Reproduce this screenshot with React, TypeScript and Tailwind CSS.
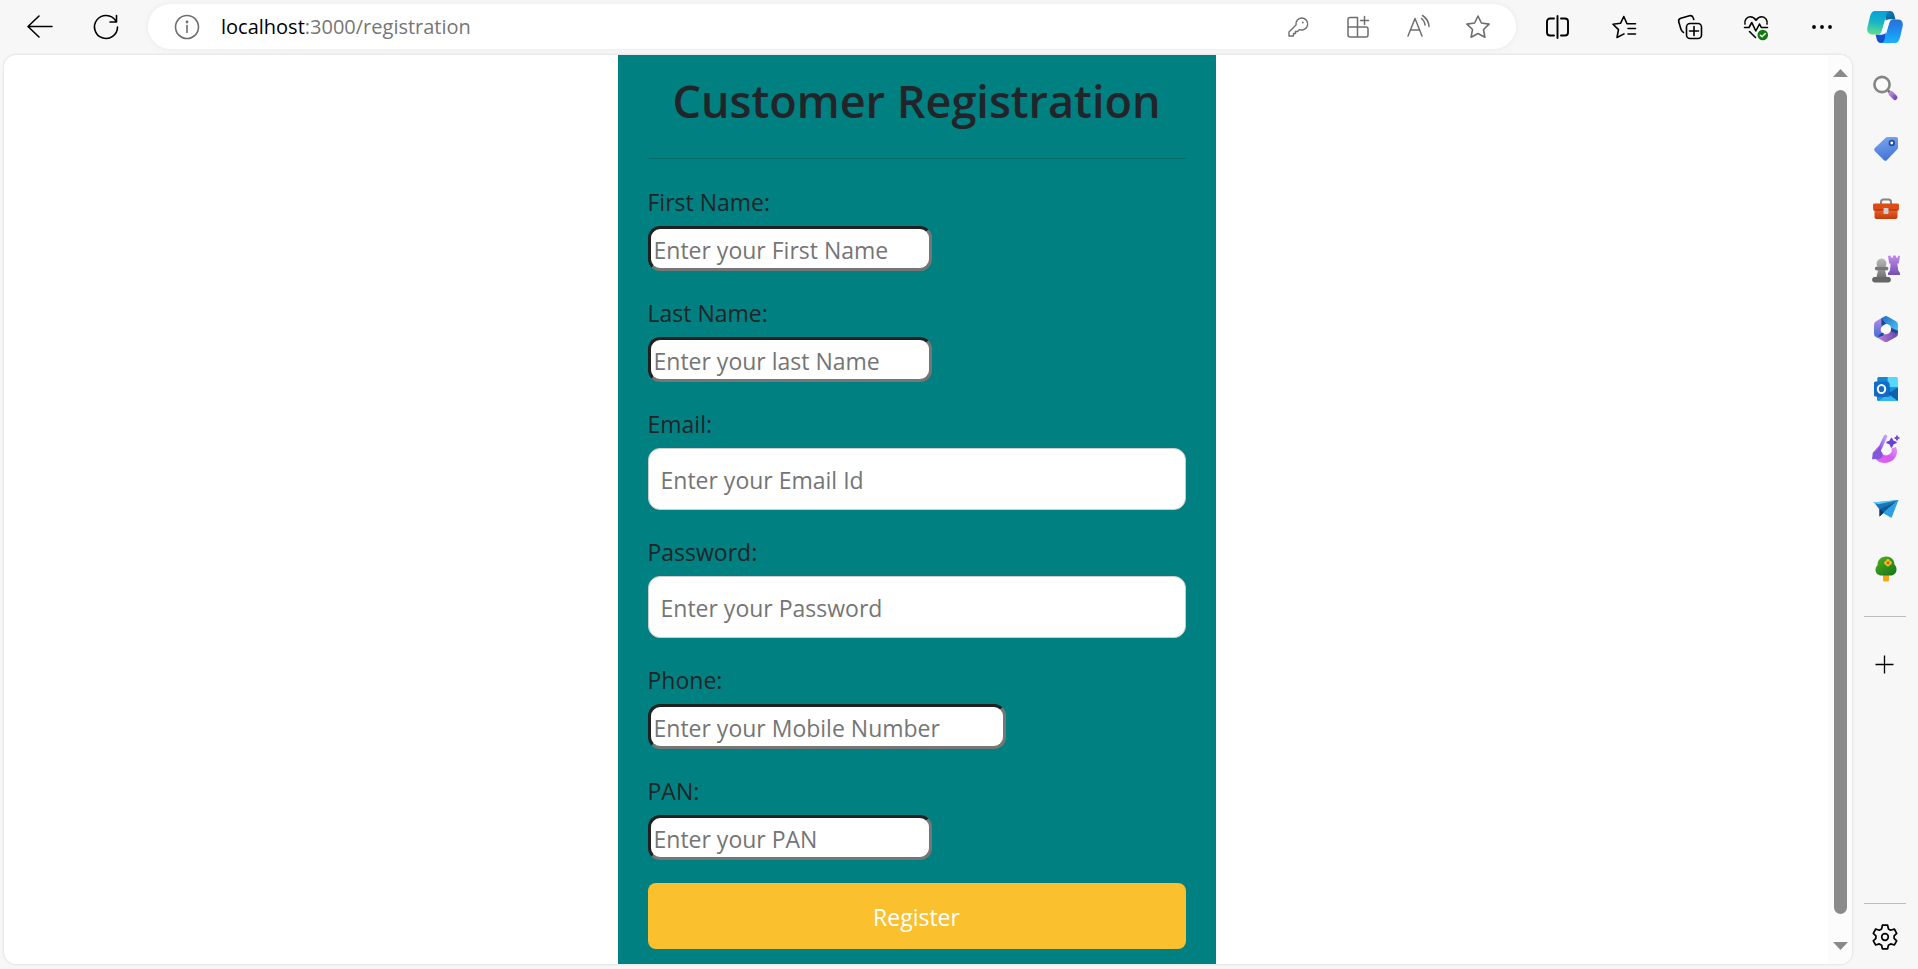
import type { ReactNode } from "react";

function ToolButton({ label, wide, children }: { label: string; wide?: boolean; children: ReactNode }) {
  return (
    <button
      type="button"
      aria-label={label}
      className={`flex h-11 shrink-0 items-center justify-center ${wide ? "w-[66px]" : "w-[60px]"}`}
    >
      {children}
    </button>
  );
}

function LineIcon({ children, className = "text-black" }: { children: ReactNode; className?: string }) {
  return (
    <svg
      width="28"
      height="28"
      viewBox="0 0 28 28"
      fill="none"
      stroke="currentColor"
      strokeWidth="1.6"
      strokeLinecap="round"
      strokeLinejoin="round"
      className={className}
    >
      {children}
    </svg>
  );
}

const gray = "text-[#6e6e6e]";

function CopilotLogo() {
  return (
    <svg width="36" height="32" viewBox="0 0 36 32">
      <defs>
        <linearGradient id="cp-a" x1="0.4" y1="0" x2="0.3" y2="1">
          <stop offset="0" stopColor="#0a9fd8" />
          <stop offset="0.45" stopColor="#16b3c9" />
          <stop offset="1" stopColor="#5fe08c" />
        </linearGradient>
        <linearGradient id="cp-b" x1="0.6" y1="0" x2="0.6" y2="1">
          <stop offset="0" stopColor="#2a6fd6" />
          <stop offset="0.5" stopColor="#1f8df0" />
          <stop offset="1" stopColor="#18b4fb" />
        </linearGradient>
        <linearGradient id="cp-c" x1="0" y1="0" x2="1" y2="1">
          <stop offset="0" stopColor="#0a86c4" />
          <stop offset="1" stopColor="#075a86" />
        </linearGradient>
      </defs>
      <path d="M17 0h6c2.500 0 3.600 1.600 4.300 4l1.200 4.500h-5.500c-2 0-3.200.8-4 2.500z" fill="url(#cp-c)" />
      <path d="M19 32h-5c-2.500 0-3.600-1.600-4.300-4L8.500 23.500h6c2 0 3.200-1.500 4-4z" fill="#1550d4" />
      <path d="M8 0h15c-2 0-3 1.600-3.700 4l-4.600 16.500c-.7 2-1.700 3-3.700 3H5c-3.500 0-5.500-2.700-4.700-6.500L3 5.500C3.900 2 5.200 0 8 0z" fill="url(#cp-a)" />
      <path d="M28 32H14c2 0 3-1.600 3.700-4l4.600-16.500c.7-2 1.700-3 3.700-3h5c3.500 0 5.500 2.700 4.700 6.500L33 26.500c-.9 3.500-2.200 5.500-5 5.500z" fill="url(#cp-b)" />
      <path d="M22 8.500h4c-2 0-3 1-3.700 3l-2.800 8.500c-.8 2.500-2.200 3.500-4.800 3.500h-3.700c2 0 3-1 3.700-3l2.700-8.500c.9-2.500 2-3.500 4.600-3.500z" fill="#f4fbff" />
    </svg>
  );
}

function SearchIcon() {
  return (
    <svg width="28" height="28" viewBox="0 0 28 28">
      <defs>
        <linearGradient id="se-a" x1="0" y1="0" x2="1" y2="1">
          <stop offset="0" stopColor="#b584e0" />
          <stop offset="1" stopColor="#7a4fb8" />
        </linearGradient>
      </defs>
      <path d="M16 15.500l4 4" stroke="#6b6b6b" strokeWidth="2.500" />
      <circle cx="10" cy="9.500" r="7.600" fill="#fafafa" stroke="#858585" strokeWidth="2.600" />
      <path d="M19 18.500l4 4" stroke="url(#se-a)" strokeWidth="5" strokeLinecap="round" />
    </svg>
  );
}

function TagIcon() {
  return (
    <svg width="28" height="28" viewBox="0 0 28 28">
      <defs>
        <linearGradient id="tg-a" x1="0.4" y1="0" x2="0.6" y2="1">
          <stop offset="0" stopColor="#76a5ee" />
          <stop offset="1" stopColor="#4272d4" />
        </linearGradient>
      </defs>
      <path d="M15.500 2H24a2 2 0 0 1 2 2v8.500a3 3 0 0 1-.9 2L15 25a2.200 2.200 0 0 1-3.200 0L2.900 16.200a2.200 2.200 0 0 1 0-3.200L13.400 2.900a3 3 0 0 1 2.100-.9z" fill="url(#tg-a)" />
      <circle cx="19.800" cy="8" r="2.300" fill="#fff" stroke="#264a9a" strokeWidth="1.800" />
    </svg>
  );
}

function ToolboxIcon() {
  return (
    <svg width="28" height="24" viewBox="0 0 28 24">
      <defs>
        <linearGradient id="tb-a" x1="0" y1="0" x2="0" y2="1">
          <stop offset="0" stopColor="#f0672b" />
          <stop offset="1" stopColor="#c03a0c" />
        </linearGradient>
      </defs>
      <path d="M9 7V5a2.500 2.500 0 0 1 2.500-2.500h5A2.500 2.500 0 0 1 19 5v2" fill="none" stroke="#858585" strokeWidth="2" />
      <path d="M2.500 12h23v8a2 2 0 0 1-2 2h-19a2 2 0 0 1-2-2z" fill="url(#tb-a)" />
      <path d="M2.500 6.500h23A1.500 1.500 0 0 1 27 8v3.500a1.500 1.500 0 0 1-1.500 1.500h-23A1.500 1.500 0 0 1 1 11.500V8a1.500 1.500 0 0 1 1.500-1.500z" fill="#df4b14" />
      <path d="M1.500 13h25" stroke="#a22d05" strokeWidth="1" />
      <rect x="11.500" y="11" width="5" height="6" rx="1" fill="#cfcfcf" />
    </svg>
  );
}

function ChessIcon() {
  return (
    <svg width="28" height="28" viewBox="0 0 28 28">
      <defs>
        <linearGradient id="ch-a" x1="0" y1="0" x2="0" y2="1">
          <stop offset="0" stopColor="#b9b9b9" />
          <stop offset="1" stopColor="#616161" />
        </linearGradient>
        <linearGradient id="ch-b" x1="0" y1="0" x2="0" y2="1">
          <stop offset="0" stopColor="#c08af0" />
          <stop offset="1" stopColor="#7650ae" />
        </linearGradient>
      </defs>
      <path d="M16 1l2.500-.5.800 2.200h1.400l.5-2.200h2.600l.5 2.200h1.400l.6-2.200 1.700.5-1.200 7.500h-1.500l1 7 1.700 2.500v2H16v-2l2-2.500.6-7h-1.400z" fill="url(#ch-b)" />
      <g fill="url(#ch-a)">
        <path d="M9.500 3.500a5 5 0 0 1 4 8h1a2 2 0 0 1 0 4h-1.500l1.500 6.500h1.500a2.500 2.500 0 0 1 0 5.500H3a2.500 2.500 0 0 1 0-5.500h1.500L6 15.500H4.700a2 2 0 0 1 0-4h.8a5 5 0 0 1 4-8z" />
      </g>
      <path d="M3 22h13a2.400 2.400 0 0 1 0 5H3a2.400 2.400 0 0 1 0-5z" fill="#666" />
      <path d="M4.500 12h10a1.500 1.500 0 0 1 0 3h-10a1.500 1.500 0 0 1 0-3z" fill="#777" />
    </svg>
  );
}

function OfficeIcon() {
  return (
    <svg width="28" height="28" viewBox="0 0 28 28">
      <defs>
        <linearGradient id="of-a" x1="0" y1="0" x2="0" y2="1">
          <stop offset="0" stopColor="#c08be8" />
          <stop offset="1" stopColor="#3e6ed8" />
        </linearGradient>
        <linearGradient id="of-b" x1="0" y1="0" x2="1" y2="1">
          <stop offset="0" stopColor="#2668cf" />
          <stop offset="1" stopColor="#46cdf2" />
        </linearGradient>
        <linearGradient id="of-c" x1="0" y1="0" x2="1" y2="0">
          <stop offset="0" stopColor="#c184e4" />
          <stop offset="1" stopColor="#6a48a2" />
        </linearGradient>
      </defs>
      <path d="M11 2.300L4 6.300a4 4 0 0 0-2 3.500v8.700a4 4 0 0 0 2 3.500l1 .5 6-3.500a5.500 5.500 0 0 1-1.500-7z" fill="url(#of-a)" />
      <path d="M9.500 3.200L12 1.700a4 4 0 0 1 4 0l8 4.600a4 4 0 0 1 2 3.500V17l-7-4.500a5 5 0 0 0-5-3.500H9.500z" fill="url(#of-b)" />
      <path d="M26 15.500v3a4 4 0 0 1-2 3.500l-8 4.500a4 4 0 0 1-4 0L4 22l8-3a5.500 5.500 0 0 0 7-6z" fill="url(#of-c)" />
      <path d="M9.500 3.200v9L14 9zM19 12.500l7 4-2 2-5-2zM5 22.500l6-1.800 1-2.200-2-1z" fill="#164b98" />
      <circle cx="14" cy="14" r="4.600" fill="#fafafa" />
    </svg>
  );
}

function OutlookIcon() {
  return (
    <svg width="28" height="28" viewBox="0 0 28 28">
      <path d="M7 2h17a1.500 1.500 0 0 1 1.500 1.500V15H5.500V3.500A1.500 1.500 0 0 1 7 2z" fill="#28a8ea" />
      <path d="M15.500 2H24a1.500 1.500 0 0 1 1.500 1.500V12h-10z" fill="#55d8fb" />
      <path d="M7 2h8.500v6H5.500V3.500A1.500 1.500 0 0 1 7 2z" fill="#1686d2" />
      <path d="M5 13l21-1v12.500a1.500 1.500 0 0 1-1.500 1.500h-18A1.500 1.500 0 0 1 5 24.500z" fill="#1690de" />
      <path d="M26 12.500V26L16 18.500z" fill="#1061a8" />
      <path d="M16 19l9.500 7h-19z" fill="#35b8f1" />
      <rect x="4" y="8" width="14" height="14" rx="1.500" fill="#0a3a6b" opacity="0.450" />
      <rect x="2" y="6.500" width="15" height="15" rx="1.500" fill="#0f6cc9" />
      <ellipse cx="9.500" cy="14" rx="3.700" ry="4.100" fill="none" stroke="#fff" strokeWidth="2" />
    </svg>
  );
}

function DesignerIcon() {
  return (
    <svg width="30" height="30" viewBox="0 0 30 30">
      <defs>
        <linearGradient id="de-a" x1="0" y1="1" x2="1" y2="0">
          <stop offset="0" stopColor="#ef62ef" />
          <stop offset="0.5" stopColor="#d45bf2" />
          <stop offset="1" stopColor="#dda0fb" />
        </linearGradient>
        <linearGradient id="de-b" x1="1" y1="0" x2="0" y2="1">
          <stop offset="0" stopColor="#c7a0fa" />
          <stop offset="1" stopColor="#7a4be0" />
        </linearGradient>
      </defs>
      <path d="M9 11.500c-3.500 2-6 5-6 8.500C3 25 7.500 29 13.500 29 20.500 29 26 24 26 17.500c0-1.800-.4-3.200-1.200-4.500l-4.300 1.500a5.500 5.500 0 0 1-9.800 4.500c-1.500-2-1.500-4.500-1.700-7.500z" fill="url(#de-a)" />
      <path d="M14.500 2.500L8 16.500" stroke="url(#de-b)" strokeWidth="3.600" strokeLinecap="round" />
      <path d="M5 16.500a4.600 4.600 0 1 1 .5 8.500l-4.500.3.500-4.300a4.600 4.600 0 0 1 3.500-4.500z" fill="#8057dd" />
      <path d="M20.500 4.500l1.400 2.600L25 8.500l-3.100 1.400-1.400 3.100-1.400-3.100L16 8.500l3.100-1.400z" fill="#6b3fdd" stroke="#6b3fdd" strokeWidth="1.500" strokeLinejoin="round" />
      <path d="M26 1.500l.8 1.700 1.700.8-1.700.8-.8 1.700-.8-1.700-1.700-.8 1.700-.8z" fill="#6b3fdd" stroke="#6b3fdd" strokeWidth="0.800" />
    </svg>
  );
}

function PlaneIcon() {
  return (
    <svg width="28" height="22" viewBox="0 0 28 22">
      <path d="M1 4.500L26.500 2 7.500 11 3.500 5.800z" fill="#35b2e8" />
      <path d="M3 5.500L26.500 2 7.500 11.500z" fill="#1a78ba" />
      <path d="M26.500 2L7.500 11v7.500l4-3.500z" fill="#0f5c9c" />
      <path d="M7.500 11v7.500l4.500-4z" fill="#0a3a68" />
      <path d="M26.500 2l-7 18-8.500-5z" fill="#2aa1e4" />
      <path d="M1 4.500L26.500 2l-20 4.200z" fill="#56c8f2" />
    </svg>
  );
}

function TreeIcon() {
  return (
    <svg width="28" height="28" viewBox="0 0 28 28">
      <defs>
        <linearGradient id="tr-a" x1="0" y1="0" x2="0.800" y2="1">
          <stop offset="0" stopColor="#56b01c" />
          <stop offset="1" stopColor="#157a1c" />
        </linearGradient>
      </defs>
      <path d="M11 18h6v7a1.500 1.500 0 0 1-1.500 1.500h-3A1.500 1.500 0 0 1 11 25z" fill="#f3a716" />
      <path d="M14 1.500c5 0 8.500 3.500 8.500 8 1.500 1.500 2 3 2 5 0 3.500-2.500 6-6 6h-9c-3.500 0-6-2.500-6-5.500 0-2 .8-3.500 2-5 0-5 3.500-8.500 8.500-8.500z" fill="url(#tr-a)" />
      <path d="M16 4a1.800 1.800 0 0 1 1.700 2 1.800 1.800 0 0 1 2 1.700 1.800 1.800 0 0 1-2 2A1.800 1.800 0 0 1 16 11.500a1.800 1.800 0 0 1-1.800-1.800 1.800 1.800 0 0 1-2-2 1.800 1.800 0 0 1 2-1.700A1.800 1.800 0 0 1 16 4z" fill="#fbc41d" />
      <circle cx="16" cy="7.800" r="1.600" fill="#dc5410" />
    </svg>
  );
}

const sidebarApps = [
  { label: "Search", icon: <SearchIcon /> },
  { label: "Shopping", icon: <TagIcon /> },
  { label: "Tools", icon: <ToolboxIcon /> },
  { label: "Games", icon: <ChessIcon /> },
  { label: "Microsoft 365", icon: <OfficeIcon /> },
  { label: "Outlook", icon: <OutlookIcon /> },
  { label: "Designer", icon: <DesignerIcon /> },
  { label: "Drop", icon: <PlaneIcon /> },
  { label: "E-tree", icon: <TreeIcon /> },
];

function BrowserBar() {
  return (
    <header className="flex h-[54px] shrink-0 items-center pr-[3px] pb-px pl-[7px]">
      <ToolButton label="Back" wide>
        <LineIcon>
          <path d="M26 13.500H2M13 3L2 13.500 13 24" />
        </LineIcon>
      </ToolButton>
      <ToolButton label="Refresh" wide>
        <LineIcon>
          <path d="M25.500 14A11.500 11.500 0 1 1 23.600 7.600M24.500 2.500v6.500h-6.500" />
        </LineIcon>
      </ToolButton>
      <div className="ml-[9px] flex h-[45px] flex-1 items-center rounded-full bg-white pr-2 pl-[9px] shadow-[0_0_6px_rgba(0,0,0,0.06)]">
        <ToolButton label="Site information">
          <LineIcon className={gray}>
            <circle cx="14" cy="14" r="11.500" />
            <path d="M14 12.500v7" />
            <circle cx="14" cy="9" r="0.600" fill="currentColor" />
          </LineIcon>
        </ToolButton>
        <button type="button" className="flex-1 cursor-text pl-1 text-left text-xl text-black">
          localhost<span className="text-[#767676]">:3000/registration</span>
        </button>
        <ToolButton label="Passwords">
          <LineIcon className={gray}>
            <path d="M17.500 5a6 6 0 1 1-2 11.600L13.500 18.500h-2v2h-2v2.500H5v-4l7-7A6 6 0 0 1 17.500 5z" strokeWidth="1.400" />
            <circle cx="18.800" cy="9.500" r="0.900" fill="currentColor" stroke="none" />
          </LineIcon>
        </ToolButton>
        <ToolButton label="Apps">
          <LineIcon className={gray}>
            <path d="M13.500 4.500H6A2 2 0 0 0 4 6.500V22a2 2 0 0 0 2 2h16a2 2 0 0 0 2-2v-6a2 2 0 0 0-2-2H4M13.500 4.500V24M20.500 3.500v8M16.500 7.500h8" strokeWidth="1.500" />
          </LineIcon>
        </ToolButton>
        <ToolButton label="Read aloud">
          <LineIcon className={gray}>
            <path d="M4 23L11 5.500 18 23M6.500 17h9M17.500 5.500c2 1.600 3.300 4 3.500 6.500M18.500 2.500c4 2.600 6.300 7 6.500 11" strokeWidth="1.500" />
          </LineIcon>
        </ToolButton>
        <ToolButton label="Add to favorites">
          <LineIcon className={gray}>
            <path d="M14 3l3.400 7 7.700 1.100-5.600 5.400 1.400 7.700L14 20.500l-6.900 3.700 1.400-7.700-5.600-5.400 7.700-1.100z" />
          </LineIcon>
        </ToolButton>
      </div>
      <div className="ml-[9px] flex">
        <ToolButton label="Split screen" wide>
          <LineIcon>
            <path d="M10 5.500H6a3 3 0 0 0-3 3v11a3 3 0 0 0 3 3h4M17 5.500H21a3 3 0 0 1 3 3v11a3 3 0 0 1-3 3h-4" strokeWidth="1.900" />
            <path d="M13.500 3v22" strokeWidth="1.900" />
          </LineIcon>
        </ToolButton>
        <ToolButton label="Favorites" wide>
          <LineIcon>
            <path d="M13.800 3.500L10.500 10.300 3 11.200l5.500 5.400L7 24.500l7-3.600M13.800 3.500L17 10.700h8.500M18 15.500h7.500M18 21h7.500" />
          </LineIcon>
        </ToolButton>
        <ToolButton label="Collections" wide>
          <LineIcon>
            <rect x="10.500" y="10.500" width="15" height="15" rx="3.500" />
            <path d="M18 13.500v9M13.500 18h9M7.500 19.500L6 18a5 5 0 0 1-1.200-2.200L2.800 9a3 3 0 0 1 2-3.700l8.700-2.500a3 3 0 0 1 3.700 2l.6 1.700" />
          </LineIcon>
        </ToolButton>
        <ToolButton label="Browser essentials" wide>
          <LineIcon>
            <path d="M3 11c-.8-3.500 1.500-7.200 5.200-7.200 2.600 0 4.300 1.300 5.800 3.400 1.500-2.100 3.200-3.400 5.800-3.400 3.700 0 6 3.700 5.200 7.200M2.500 14.500H7l2.800-5 4 8.500 3.700-7 1.800 3.500h6.200M7.500 18.500l6 6" />
            <circle cx="20.800" cy="22" r="5.300" fill="#107c10" stroke="none" />
            <path d="M18.400 22.200l1.700 1.600 3.200-3.400" stroke="#fff" strokeWidth="1.400" />
          </LineIcon>
        </ToolButton>
        <ToolButton label="Settings and more" wide>
          <LineIcon>
            <g fill="currentColor" stroke="none">
              <circle cx="6" cy="14" r="1.900" />
              <circle cx="14" cy="14" r="1.900" />
              <circle cx="22" cy="14" r="1.900" />
            </g>
          </LineIcon>
        </ToolButton>
        <ToolButton label="Copilot">
          <CopilotLogo />
        </ToolButton>
      </div>
    </header>
  );
}

function Sidebar() {
  return (
    <aside className="flex w-[66px] shrink-0 flex-col items-center pt-[5px]">
      {sidebarApps.map((app) => (
        <button key={app.label} type="button" aria-label={app.label} className="flex h-[60px] w-full shrink-0 items-center justify-center pl-px">
          {app.icon}
        </button>
      ))}
      <div className="mt-[17px] h-px w-[42px] bg-[#bdbdbd]" />
      <button type="button" aria-label="Customize" className="mt-[18px] flex h-[60px] w-full items-center justify-center">
        <LineIcon>
          <path d="M13.500 4.500v18M4.500 13.500h18" strokeWidth="1.300" strokeLinecap="butt" />
        </LineIcon>
      </button>
      <div className="mt-auto h-px w-[42px] bg-[#bdbdbd]" />
      <button type="button" aria-label="Settings" className="mt-[3px] mb-[2px] flex h-[60px] w-full items-center justify-center">
        <LineIcon>
          <path
            d="M11.400 2.200h5.200l.8 3.700 2.300 1.300 3.600-1.200 2.400 4.300-2.600 2.500v2.500l2.600 2.500-2.400 4.200-3.600-1.100-2.300 1.300-.8 3.700h-5.200l-.8-3.700-2.300-1.300-3.600 1.100-2.400-4.200 2.600-2.500v-2.500L2.300 10.300 4.700 6l3.600 1.200 2.300-1.300z"
            strokeWidth="1.700"
          />
          <circle cx="14" cy="14" r="3.300" strokeWidth="1.700" />
        </LineIcon>
      </button>
    </aside>
  );
}

type FieldProps = { id: string; label: string; placeholder: string; type?: string; kind: "short" | "medium" | "full" };

const fieldStyles = {
  short: "h-[45px] w-[284px] border-[3px] border-t-[#212121] border-l-[#212121] border-r-[#767676] border-b-[#767676] px-[3px]",
  medium: "h-[45px] w-[358px] border-[3px] border-t-[#212121] border-l-[#212121] border-r-[#767676] border-b-[#767676] px-[3px]",
  full: "h-[62px] w-full border border-[#ccc] px-3",
};

function Field({ id, label, placeholder, type = "text", kind }: FieldProps) {
  return (
    <div className="flex flex-col items-start gap-[6px]">
      <label htmlFor={id} className="leading-9">
        {label}
      </label>
      <input
        id={id}
        type={type}
        placeholder={placeholder}
        className={`max-w-full rounded-xl bg-white pt-[2px] placeholder:text-[#757575] ${fieldStyles[kind]}`}
      />
    </div>
  );
}

function RegistrationForm() {
  return (
    <form
      onSubmit={(e) => e.preventDefault()}
      className="flex w-[598px] max-w-full flex-col bg-[#008080] px-[30px] pt-4 text-[23px] text-[#212529]"
    >
      <h1 className="text-center text-[45px] leading-[60px] font-semibold">Customer Registration</h1>
      <hr className="mt-[27px] border-[#086969]" />
      <div className="mt-[25px] flex flex-col gap-6">
        <Field id="first-name" label="First Name:" placeholder="Enter your First Name" kind="short" />
        <Field id="last-name" label="Last Name:" placeholder="Enter your last Name" kind="short" />
        <Field id="email" label="Email:" placeholder="Enter your Email Id" type="email" kind="full" />
        <Field id="password" label="Password:" placeholder="Enter your Password" type="password" kind="full" />
        <Field id="phone" label="Phone:" placeholder="Enter your Mobile Number" type="tel" kind="medium" />
        <Field id="pan" label="PAN:" placeholder="Enter your PAN" kind="short" />
        <button type="submit" className="-mt-px h-[66px] shrink-0 rounded-lg bg-[#fbc02d] pt-[2px] text-white">
          Register
        </button>
      </div>
    </form>
  );
}

function ScrollTrack() {
  return (
    <div className="flex w-[24px] shrink-0 flex-col items-center bg-[#fcfcfc] py-[14px] pl-px">
      <svg width="15" height="8" viewBox="0 0 15 8">
        <path d="M7.500 0L15 8H0z" fill="#8a8a8a" />
      </svg>
      <div className="mt-[13px] mb-7 w-[13px] flex-1 rounded-full bg-[#8b8b8b]" />
      <svg width="15" height="8" viewBox="0 0 15 8">
        <path d="M7.500 8L15 0H0z" fill="#8a8a8a" />
      </svg>
    </div>
  );
}

export default function App() {
  return (
    <div className="flex h-screen flex-col overflow-hidden bg-[#f7f7f7] font-['Open_Sans','Noto_Sans',sans-serif]">
      <BrowserBar />
      <div className="flex min-h-0 flex-1">
        <div className="mt-px mb-[5px] ml-1 flex min-w-0 flex-1 overflow-hidden rounded-xl bg-white shadow-[0_0_2px_1px_rgba(0,0,0,0.08)]">
          <main className="flex min-w-0 flex-1 justify-center overflow-hidden pl-px">
            <RegistrationForm />
          </main>
          <ScrollTrack />
        </div>
        <Sidebar />
      </div>
    </div>
  );
}
